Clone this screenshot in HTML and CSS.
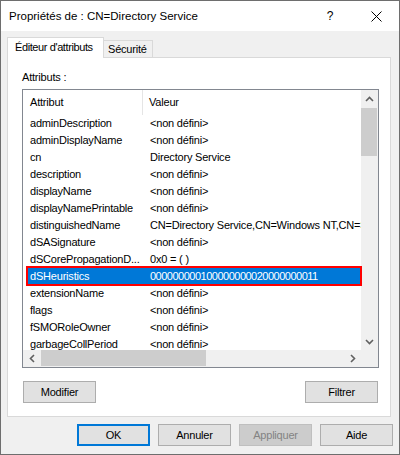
FILE: index.html
```html
<!DOCTYPE html>
<html lang="fr">
<head>
<meta charset="utf-8">
<title>Propriétés de : CN=Directory Service</title>
<link rel="stylesheet" href="styles.css">
</head>
<body>
<div class="window">
  <div class="titlebar">
    <div class="title">Propriétés de : CN=Directory Service</div>
    <div class="tb-btn help">?</div>
    <div class="tb-btn close">
      <svg width="11" height="11" viewBox="0 0 11 11"><path d="M0.5 0.5 L10.5 10.5 M10.5 0.5 L0.5 10.5" stroke="#000" stroke-width="1" fill="none"/></svg>
    </div>
  </div>
  <div class="content">
    <div class="tabs">
      <div class="tab active">Éditeur d'attributs</div>
      <div class="tab">Sécurité</div>
    </div>
    <div class="panel">
      <div class="label">Attributs :</div>
      <div class="listbox">
        <div class="viewport">
          <div class="header">
            <div class="hcell c1">Attribut</div>
            <div class="hcell c2">Valeur</div>
          </div>
          <div class="row"><div class="cell c1">adminDescription</div><div class="cell c2">&lt;non défini&gt;</div></div>
          <div class="row"><div class="cell c1">adminDisplayName</div><div class="cell c2">&lt;non défini&gt;</div></div>
          <div class="row"><div class="cell c1">cn</div><div class="cell c2">Directory Service</div></div>
          <div class="row"><div class="cell c1">description</div><div class="cell c2">&lt;non défini&gt;</div></div>
          <div class="row"><div class="cell c1">displayName</div><div class="cell c2">&lt;non défini&gt;</div></div>
          <div class="row"><div class="cell c1">displayNamePrintable</div><div class="cell c2">&lt;non défini&gt;</div></div>
          <div class="row"><div class="cell c1">distinguishedName</div><div class="cell c2">CN=Directory Service,CN=Windows NT,CN=Services,CN=Configuration</div></div>
          <div class="row"><div class="cell c1">dSASignature</div><div class="cell c2">&lt;non défini&gt;</div></div>
          <div class="row"><div class="cell c1">dSCorePropagationD...</div><div class="cell c2">0x0 = ( )</div></div>
          <div class="row selected"><div class="cell c1">dSHeuristics</div><div class="cell c2">000000000100000000020000000011</div></div>
          <div class="row"><div class="cell c1">extensionName</div><div class="cell c2">&lt;non défini&gt;</div></div>
          <div class="row"><div class="cell c1">flags</div><div class="cell c2">&lt;non défini&gt;</div></div>
          <div class="row"><div class="cell c1">fSMORoleOwner</div><div class="cell c2">&lt;non défini&gt;</div></div>
          <div class="row"><div class="cell c1">garbageCollPeriod</div><div class="cell c2">&lt;non défini&gt;</div></div>
        </div>
        <div class="vscroll">
          <div class="sbtn"><svg width="9" height="6" viewBox="0 0 9 6"><path d="M1 5 L4.5 1.5 L8 5" stroke="#606060" stroke-width="1.6" fill="none"/></svg></div>
          <div class="vtrack"><div class="vthumb"></div></div>
          <div class="sbtn"><svg width="9" height="6" viewBox="0 0 9 6"><path d="M1 1 L4.5 4.5 L8 1" stroke="#606060" stroke-width="1.6" fill="none"/></svg></div>
        </div>
        <div class="hscroll">
          <div class="sbtn"><svg width="6" height="9" viewBox="0 0 6 9"><path d="M5 1 L1.5 4.5 L5 8" stroke="#606060" stroke-width="1.6" fill="none"/></svg></div>
          <div class="htrack"><div class="hthumb"></div></div>
          <div class="sbtn"><svg width="6" height="9" viewBox="0 0 6 9"><path d="M1 1 L4.5 4.5 L1 8" stroke="#606060" stroke-width="1.6" fill="none"/></svg></div>
        </div>
        <div class="corner"></div>
        <div class="highlight"></div>
      </div>
      <div class="panel-buttons">
        <div class="btn">Modifier</div>
        <div class="btn">Filtrer</div>
      </div>
    </div>
    <div class="footer">
      <div class="btn default">OK</div>
      <div class="btn">Annuler</div>
      <div class="btn disabled">Appliquer</div>
      <div class="btn">Aide</div>
    </div>
  </div>
</div>
</body>
</html>
```

FILE: styles.css
```css
* { box-sizing: border-box; }
html, body { margin: 0; padding: 0; }
body {
  font-family: "Liberation Sans", Arial, sans-serif;
  font-size: 11px;
  color: #000;
  background: #fff;
}
.window {
  width: 400px;
  height: 455px;
  border: 1px solid #6e6e6e;
  background: #f0f0f0;
  display: flex;
  flex-direction: column;
  letter-spacing: -0.2px;
}
.titlebar {
  height: 30px;
  background: #fff;
  display: flex;
  align-items: center;
  padding-left: 8px;
  flex: none;
  letter-spacing: 0;
}
.title { flex: 1; font-size: 11.5px; }
.tb-btn {
  width: 46px;
  height: 30px;
  display: flex;
  align-items: center;
  justify-content: center;
}
.help { font-size: 12px; }
.content {
  padding: 6px 6px 0 6px;
  flex: 1;
  display: flex;
  flex-direction: column;
}
.tabs {
  display: flex;
  align-items: flex-end;
  height: 20px;
  white-space: nowrap;
}
.tab {
  height: 17px;
  line-height: 16px;
  padding: 0 5px 0 4px;
  border: 1px solid #d9d9d9;
  border-bottom: none;
  border-left: none;
  background: #f0f0f0;
}
.tab.active {
  height: 21px;
  margin-bottom: -1px;
  padding: 0 0 0 7px;
  border-left: 1px solid #d9d9d9;
  background: #fff;
  line-height: 19px;
  position: relative;
  z-index: 1;
  width: 97px;
  letter-spacing: -0.4px;
}
.panel {
  width: 384px;
  height: 360px;
  border: 1px solid #d9d9d9;
  background: #fff;
  padding: 12px 0 0 14px;
}
.label { height: 14px; line-height: 14px; }
.listbox {
  margin-top: 5px;
  width: 357px;
  height: 279px;
  border: 1px solid #828790;
  display: grid;
  grid-template-columns: 338px 17px;
  grid-template-rows: 260px 17px;
  position: relative;
}
.viewport {
  overflow: hidden;
  white-space: nowrap;
}
.header {
  height: 25px;
  display: flex;
}
.hcell { line-height: 25px; }
.hcell.c1 {
  width: 120px;
  padding-left: 7px;
  border-right: 1px solid #e5e5e5;
}
.hcell.c2 { padding-left: 6px; }
.row {
  height: 17px;
  line-height: 17px;
  margin-left: 5px;
  display: flex;
}
.row .c1 { width: 122px; padding-left: 2px; flex: none; }
.row .c2 { flex: none; }
.row.selected { background: #0078d7; color: #fff; }
.row.selected .c2 { letter-spacing: -0.5px; }
.vscroll {
  background: #f0f0f0;
  display: flex;
  flex-direction: column;
}
.sbtn {
  width: 17px;
  height: 17px;
  display: flex;
  align-items: center;
  justify-content: center;
  flex: none;
}
.vtrack { flex: 1; padding: 1px 1px 0 0; }
.vthumb { height: 48px; background: #cdcdcd; }
.hscroll {
  background: #f0f0f0;
  display: flex;
}
.htrack { flex: 1; padding: 0 0 1px 1px; }
.hthumb { width: 165px; height: 100%; background: #cdcdcd; }
.corner { background: #f0f0f0; }
.highlight {
  position: absolute;
  left: 3px;
  top: 176px;
  width: 336px;
  height: 20px;
  border: 2px solid #ff0000;
  pointer-events: none;
}
.panel-buttons {
  margin-top: 13px;
  width: 357px;
  padding: 0 1px;
  display: flex;
  justify-content: space-between;
}
.btn {
  width: 73px;
  height: 22px;
  line-height: 20px;
  text-align: center;
  background: #e1e1e1;
  border: 1px solid #adadad;
}
.btn.default {
  border: 2px solid #0078d7;
  line-height: 18px;
}
.btn.disabled {
  background: #cccccc;
  border-color: #bfbfbf;
  color: #838383;
}
.footer {
  margin-top: 7px;
  display: flex;
  justify-content: flex-end;
  gap: 8px;
}
```
